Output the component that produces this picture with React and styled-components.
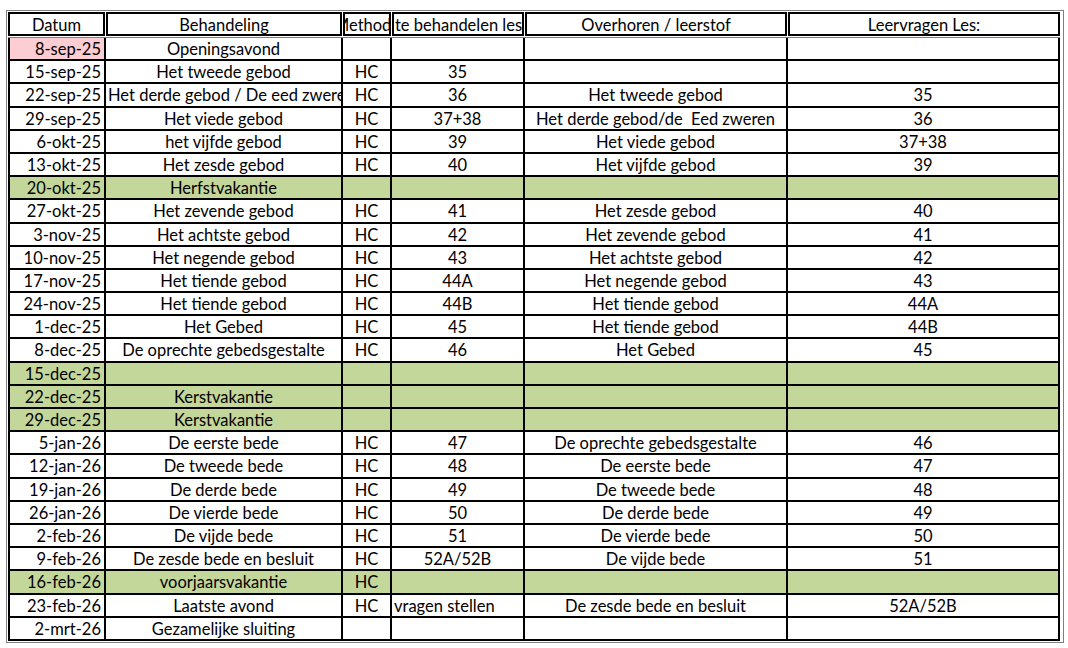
import React from 'react';
import styled, { createGlobalStyle } from 'styled-components';

const GlobalStyle = createGlobalStyle`
  html, body {
    margin: 0;
    padding: 0;
    background: #ffffff;
  }
  body {
    font-family: Lato, "Liberation Sans", sans-serif;
    color: #000;
  }
`;

const COLS = '96px 237px 49px 133px 263px 1fr';
const HEAD_COLS = '98px 237px 49px 133px 263px 1fr';

const Frame = styled.div`
  margin: 10px 0 0 6px;
  width: 1058px;
  box-sizing: border-box;
  border: 1px solid #7f7f7f;
  padding: 1px 3px 1px 1px;
`;

const HeadRow = styled.div`
  display: grid;
  grid-template-columns: ${HEAD_COLS};
  height: 26px;
  box-sizing: border-box;
  padding-bottom: 1px;
  border-bottom: 1px solid #7f7f7f;
`;

const HeadCell = styled.div`
  box-sizing: border-box;
  height: 24px;
  margin-right: 1px;
  border: 2px solid #000;
  display: flex;
  align-items: center;
  justify-content: ${p => (p.$left ? 'flex-start' : 'center')};
  padding: 1px ${p => (p.$left ? '1px' : '0')} 0;
  overflow: hidden;
  white-space: nowrap;
  font-size: 16.5px;
  &:last-child {
    margin-right: 0;
  }
`;

const Row = styled.div`
  display: grid;
  grid-template-columns: ${COLS};
  height: 23.2px;
  box-sizing: border-box;
  border-left: 2px solid #000;
  border-right: 2px solid #000;
  border-bottom: 2px solid #000;
  background: ${p => (p.$holiday ? '#c4d79b' : '#ffffff')};
`;

const Cell = styled.div`
  box-sizing: border-box;
  border-right: 2px solid #000;
  padding: 1px ${p => (p.$align === 'right' ? '3px' : '2px')} 0;
  text-align: ${p => p.$align || 'center'};
  line-height: 21px;
  font-size: 16.5px;
  white-space: pre;
  overflow: hidden;
  background: ${p => p.$bg || 'transparent'};
  &:last-child {
    border-right: none;
  }
`;

const headers = [
  { text: 'Datum' },
  { text: 'Behandeling' },
  { text: 'Methode' },
  { text: 'te behandelen les', left: true },
  { text: 'Overhoren / leerstof' },
  { text: 'Leervragen Les:' },
];

// date, behandeling, methode, les, overhoren, leervragen
const rows = [
  { d: '8-sep-25', b: 'Openingsavond', pink: true },
  { d: '15-sep-25', b: 'Het tweede gebod', m: 'HC', l: '35' },
  { d: '22-sep-25', b: 'Het derde gebod / De eed zweren', m: 'HC', l: '36', o: 'Het tweede gebod', q: '35' },
  { d: '29-sep-25', b: 'Het viede gebod', m: 'HC', l: '37+38', o: 'Het derde gebod/de  Eed zweren', q: '36' },
  { d: '6-okt-25', b: 'het vijfde gebod', m: 'HC', l: '39', o: 'Het viede gebod', q: '37+38' },
  { d: '13-okt-25', b: 'Het zesde gebod', m: 'HC', l: '40', o: 'Het vijfde gebod', q: '39' },
  { d: '20-okt-25', b: 'Herfstvakantie', holiday: true },
  { d: '27-okt-25', b: 'Het zevende gebod', m: 'HC', l: '41', o: 'Het zesde gebod', q: '40' },
  { d: '3-nov-25', b: 'Het achtste gebod', m: 'HC', l: '42', o: 'Het zevende gebod', q: '41' },
  { d: '10-nov-25', b: 'Het negende gebod', m: 'HC', l: '43', o: 'Het achtste gebod', q: '42' },
  { d: '17-nov-25', b: 'Het tiende gebod', m: 'HC', l: '44A', o: 'Het negende gebod', q: '43' },
  { d: '24-nov-25', b: 'Het tiende gebod', m: 'HC', l: '44B', o: 'Het tiende gebod', q: '44A' },
  { d: '1-dec-25', b: 'Het Gebed', m: 'HC', l: '45', o: 'Het tiende gebod', q: '44B' },
  { d: '8-dec-25', b: 'De oprechte gebedsgestalte', m: 'HC', l: '46', o: 'Het Gebed', q: '45' },
  { d: '15-dec-25', holiday: true },
  { d: '22-dec-25', b: 'Kerstvakantie', holiday: true },
  { d: '29-dec-25', b: 'Kerstvakantie', holiday: true },
  { d: '5-jan-26', b: 'De eerste bede', m: 'HC', l: '47', o: 'De oprechte gebedsgestalte', q: '46' },
  { d: '12-jan-26', b: 'De tweede bede', m: 'HC', l: '48', o: 'De eerste bede', q: '47' },
  { d: '19-jan-26', b: 'De derde bede', m: 'HC', l: '49', o: 'De tweede bede', q: '48' },
  { d: '26-jan-26', b: 'De vierde bede', m: 'HC', l: '50', o: 'De derde bede', q: '49' },
  { d: '2-feb-26', b: 'De vijde bede', m: 'HC', l: '51', o: 'De vierde bede', q: '50' },
  { d: '9-feb-26', b: 'De zesde bede en besluit', m: 'HC', l: '52A/52B', o: 'De vijde bede', q: '51' },
  { d: '16-feb-26', b: 'voorjaarsvakantie', m: 'HC', holiday: true },
  { d: '23-feb-26', b: 'Laatste avond', m: 'HC', l: 'vragen stellen', lLeft: true, o: 'De zesde bede en besluit', q: '52A/52B' },
  { d: '2-mrt-26', b: 'Gezamelijke sluiting' },
];

export default function App() {
  return (
    <>
      <GlobalStyle />
      <Frame>
        <HeadRow>
          {headers.map(h => (
            <HeadCell key={h.text} $left={h.left}>{h.text}</HeadCell>
          ))}
        </HeadRow>
        {rows.map(r => (
          <Row key={r.d} $holiday={r.holiday}>
            <Cell $align="right" $bg={r.pink ? '#fccdd2' : undefined}>{r.d}</Cell>
            <Cell>{r.b}</Cell>
            <Cell>{r.m}</Cell>
            <Cell $align={r.lLeft ? 'left' : 'center'}>{r.l}</Cell>
            <Cell>{r.o}</Cell>
            <Cell>{r.q}</Cell>
          </Row>
        ))}
      </Frame>
    </>
  );
}
